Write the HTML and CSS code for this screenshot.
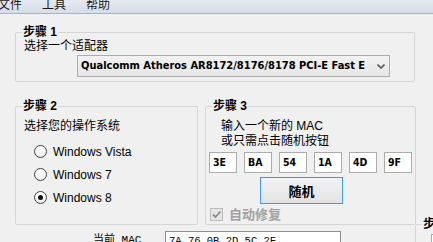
FILE: index.html
```html
<!DOCTYPE html>
<html lang="zh">
  <head>
    <meta charset="UTF-8" />
    <title>MAC</title>
    <link rel="stylesheet" href="styles.css">
  </head>
  <body>
    <div class="menubar">
      <span>文件</span>
      <span>工具</span>
      <span>帮助</span>
    </div>
    <div class="main">
      <fieldset class="group step1">
        <legend>步骤 1</legend>
        <p class="hint">选择一个适配器</p>
        <div class="combo">
          <span>Qualcomm Atheros AR8172/8176/8178 PCI-E Fast E</span>
          <svg width="8" height="5" viewBox="0 0 8 5"><path d="M0.5 0.5 L4 4 L7.5 0.5" fill="none" stroke="#5a5a5a" stroke-width="1.6"/></svg>
        </div>
      </fieldset>
      <div class="row">
        <fieldset class="group step2">
          <legend>步骤 2</legend>
          <p class="hint">选择您的操作系统</p>
          <ul class="os">
            <li><span class="radio"></span>Windows Vista</li>
            <li><span class="radio"></span>Windows 7</li>
            <li><span class="radio checked"></span>Windows 8</li>
          </ul>
        </fieldset>
        <fieldset class="group step3">
          <legend>步骤 3</legend>
          <p class="intro">输入一个新的 MAC<br>或只需点击随机按钮</p>
          <div class="mac-boxes">
            <div class="mac">3E</div>
            <div class="mac">BA</div>
            <div class="mac">54</div>
            <div class="mac">1A</div>
            <div class="mac">4D</div>
            <div class="mac">9F</div>
          </div>
          <button class="random">随机</button>
          <div class="autofix">
            <span class="check"><svg width="11" height="11" viewBox="0 0 11 11"><path d="M2 5.5 L4.5 8 L9.5 2.5" fill="none" stroke="#8c8c8c" stroke-width="1.8"/></svg></span>
            自动修复
          </div>
        </fieldset>
      </div>
      <div class="row bottom">
        <div class="current">
          <span class="current-label">当前 MAC</span>
          <div class="current-mac">7A 76 0B 2D 5C 2F</div>
        </div>
        <fieldset class="group step4">
          <legend>步骤 4</legend>
          <div class="field"></div>
        </fieldset>
      </div>
    </div>
  </body>
</html>
```

FILE: styles.css
```css
* {
  margin: 0;
  padding: 0;
  box-sizing: border-box;
}
html,
body {
  overflow: hidden;
}
body {
  width: 433px;
  height: 242px;
  background-color: #f0f0f0;
  color: #000;
  font-family: "Liberation Sans", "Noto Sans CJK SC", sans-serif;
  font-size: 12px;
  line-height: 14px;
}
.menubar {
  height: 14px;
  margin-left: -2px;
  display: flex;
  gap: 20px;
  overflow: hidden;
  background: linear-gradient(#e5eaf2, #d6dde8);
  border-bottom: 1px solid #a9b2c1;
  color: #1a1a1a;
}
.menubar span {
  margin-top: -2px;
}
.main {
  padding-left: 15px;
}
.group {
  border: 1px solid #d5d5d5;
  border-radius: 2px;
  padding: 0 8px 4px;
}
.group legend {
  font-weight: bold;
  padding: 0 1px;
  margin-left: -2px;
  line-height: 14px;
}
.step1 {
  width: 400px;
  margin-top: 11px;
}
.combo {
  margin: 2px 0 0 53px;
  width: 313px;
  height: 22px;
  border: 1px solid #acacac;
  background: linear-gradient(#f2f2f2, #e6e6e6);
  display: flex;
  align-items: center;
  justify-content: space-between;
  padding: 0 4px 0 3px;
  font-family: "DejaVu Sans", sans-serif;
  font-stretch: condensed;
  font-weight: bold;
  font-size: 11px;
  white-space: nowrap;
  overflow: hidden;
}
.row {
  display: flex;
  gap: 7px;
  margin-top: 17px;
}
.row > * {
  flex-shrink: 0;
}
.step2 {
  width: 183px;
  padding-bottom: 15px;
}
.step2 .hint {
  margin-top: 6px;
}
.os {
  list-style: none;
  margin-top: 7px;
}
.os li {
  height: 23px;
  display: flex;
  align-items: center;
  gap: 6px;
  padding-left: 10px;
}
.radio {
  width: 13px;
  height: 13px;
  border: 1px solid #3f3f3f;
  border-radius: 50%;
  background: linear-gradient(#ffffff, #eeeeee);
  display: grid;
  place-items: center;
}
.radio.checked::after {
  content: "";
  width: 5px;
  height: 5px;
  border-radius: 50%;
  background-color: #111;
}
.step3 {
  width: 210px;
  padding: 0 3px;
}
.step3 legend {
  margin-left: 3px;
}
.intro {
  margin: 6px 0 0 12px;
  line-height: 15px;
}
.mac-boxes {
  display: flex;
  gap: 7px;
  margin-top: 3px;
}
.mac {
  width: 28px;
  height: 21px;
  border: 1px solid #acacac;
  background-color: #fff;
  padding-left: 3px;
  line-height: 19px;
  font-family: "DejaVu Sans", sans-serif;
  font-stretch: condensed;
  font-weight: bold;
  font-size: 10.5px;
}
.random {
  display: block;
  margin: 4px 0 0 51px;
  width: 83px;
  height: 27px;
  border: 1px solid #3d9be9;
  background: linear-gradient(#f3f3f3, #e3e3e3);
  font-family: "Noto Sans CJK SC", sans-serif;
  font-weight: bold;
  font-size: 13px;
  color: #000;
}
.autofix {
  margin: 4px 0 0 1px;
  display: flex;
  align-items: center;
  gap: 6px;
  height: 13px;
  color: #a2a2a2;
  font-weight: bold;
  font-size: 13px;
}
.check {
  width: 13px;
  height: 13px;
  border: 1px solid #bcbcbc;
  background-color: #e6e6e6;
  display: grid;
  place-items: center;
}
.bottom {
  margin-top: 0;
  gap: 0;
  align-items: flex-start;
}
.current {
  width: 400px;
  margin-top: 6px;
  display: flex;
  font-family: "Liberation Mono", "Noto Sans CJK SC", monospace;
  font-size: 11px;
}
.current-label {
  width: 72px;
  margin: 2px 0 0 78px;
}
.current-mac {
  width: 176px;
  height: 20px;
  border: 1px solid #8e8f8f;
  background-color: #fff;
  padding: 2px 0 0 3px;
  font-size: 10.5px;
}
.step4 {
  width: 200px;
  margin-top: -8px;
}
.field {
  margin: 3px 0 0 7px;
  width: 150px;
  height: 20px;
  border: 1px solid #acacac;
  background-color: #fff;
}
```
